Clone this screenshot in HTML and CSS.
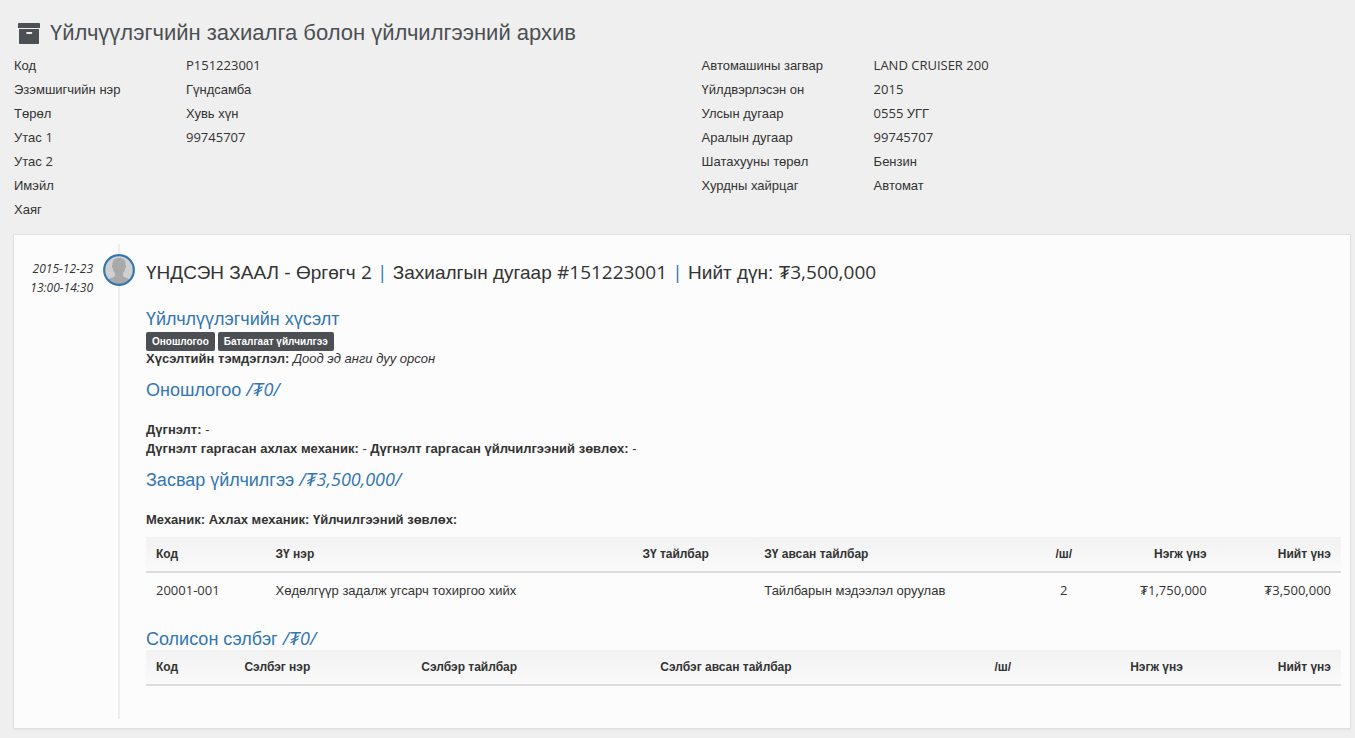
FILE: index.html
```html
<!DOCTYPE html>
<html lang="mn">
<head>
<meta charset="utf-8">
<title>Үйлчүүлэгчийн захиалга болон үйлчилгээний архив</title>
<link rel="stylesheet" href="styles.css">
</head>
<body>
<main class="page">
  <h1 class="page-title">
    <svg class="page-icon" viewBox="0 0 22 21" aria-hidden="true">
      <path d="M0.8 0h20.4q.8 0 .8.8v4.2H0V.8Q0 0 .8 0z"/>
      <path fill-rule="evenodd" d="M1 6h20v14.200q0 .8-.8.800H1.800Q1 21 1 20.200zM9 9q-.8 0-.8 1t.8 1h4.500q.8 0 .8-1t-.8-1z"/>
    </svg>
    <span>Үйлчүүлэгчийн захиалга болон үйлчилгээний архив</span>
  </h1>

  <section class="summary">
    <dl class="facts">
      <dt>Код</dt><dd class="latin">P151223001</dd>
      <dt>Эзэмшигчийн нэр</dt><dd>Гүндсамба</dd>
      <dt>Төрөл</dt><dd>Хувь хүн</dd>
      <dt>Утас <span class="latin">1</span></dt><dd class="latin">99745707</dd>
      <dt>Утас <span class="latin">2</span></dt><dd></dd>
      <dt>Имэйл</dt><dd></dd>
      <dt>Хаяг</dt><dd></dd>
    </dl>
    <dl class="facts">
      <dt>Автомашины загвар</dt><dd class="latin">LAND CRUISER 200</dd>
      <dt>Үйлдвэрлэсэн он</dt><dd class="latin">2015</dd>
      <dt>Улсын дугаар</dt><dd><span class="latin">0555 </span>УГГ</dd>
      <dt>Аралын дугаар</dt><dd class="latin">99745707</dd>
      <dt>Шатахууны төрөл</dt><dd>Бензин</dd>
      <dt>Хурдны хайрцаг</dt><dd>Автомат</dd>
    </dl>
  </section>

  <section class="card">
    <article class="entry">
      <time class="entry-time">2015-12-23<br>13:00-14:30</time>
      <div class="rail">
        <svg class="avatar" viewBox="0 0 33 33" aria-hidden="true">
          <circle cx="16.500" cy="16.500" r="15.500" fill="#d0d0d0"/>
          <path fill="#a9a9a9" d="M16.500 4c-4.800 0-7 2.800-6.700 7-.8.300-.7 2.200.4 4.200.5 2.200 1.200 3.600 2.100 4.500v3c-1.600 2-6.100 1.900-7.800 4.600 2.700 3.200 6.900 5.500 12 5.500s9.300-2.300 12-5.500c-1.700-2.700-6.200-2.600-7.800-4.600v-3c.9-.9 1.600-2.300 2.100-4.500 1.100-2 1.200-3.900.4-4.200.3-4.200-1.900-7-6.700-7z"/>
          <circle cx="16.500" cy="16.500" r="15.300" fill="none" stroke="#3276b1" stroke-width="2.200"/>
        </svg>
      </div>
      <div class="entry-body">
        <h2 class="entry-title">ҮНДСЭН ЗААЛ - Өргөгч <span class="latin">2</span> <span class="latin bar">|</span> Захиалгын дугаар <span class="latin">#151223001</span> <span class="latin bar">|</span> Нийт дүн: <span class="latin">₮3,500,000</span></h2>

        <h3 class="section-title">Үйлчлүүлэгчийн хүсэлт</h3>
        <div class="tags"><span class="tag">Оношлогоо</span><span class="tag">Баталгаат үйлчилгээ</span></div>
        <p class="line"><strong>Хүсэлтийн тэмдэглэл:</strong> <em>Доод эд анги дуу орсон</em></p>

        <h3 class="section-title">Оношлогоо <em class="latin">/₮0/</em></h3>
        <p class="line spaced"><strong>Дүгнэлт:</strong> -</p>
        <p class="line"><strong>Дүгнэлт гаргасан ахлах механик:</strong> - <strong>Дүгнэлт гаргасан үйлчилгээний зөвлөх:</strong> -</p>

        <h3 class="section-title">Засвар үйлчилгээ <em class="latin">/₮3,500,000/</em></h3>
        <p class="line spaced"><strong>Механик:</strong> <strong>Ахлах механик:</strong> <strong>Үйлчилгээний зөвлөх:</strong></p>

        <table class="grid services">
          <colgroup><col class="s-code"><col><col class="s-note"><col class="s-taken"><col class="qty"><col class="s-price"><col class="s-total"></colgroup>
          <thead>
            <tr><th>Код</th><th>ЗҮ нэр</th><th>ЗҮ тайлбар</th><th>ЗҮ авсан тайлбар</th><th class="center">/ш/</th><th class="right">Нэгж үнэ</th><th class="right">Нийт үнэ</th></tr>
          </thead>
          <tbody>
            <tr><td><span class="latin">20001-001</span></td><td>Хөдөлгүүр задалж угсарч тохиргоо хийх</td><td></td><td>Тайлбарын мэдээлэл оруулав</td><td class="center"><span class="latin">2</span></td><td class="right"><span class="latin">₮1,750,000</span></td><td class="right"><span class="latin">₮3,500,000</span></td></tr>
          </tbody>
        </table>

        <h3 class="section-title parts-title">Солисон сэлбэг <em class="latin">/₮0/</em></h3>
        <table class="grid">
          <colgroup><col class="p-code"><col><col class="p-note"><col class="p-taken"><col class="qty"><col class="p-price"><col class="p-total"></colgroup>
          <thead>
            <tr><th>Код</th><th>Сэлбэг нэр</th><th>Сэлбэр тайлбар</th><th>Сэлбэг авсан тайлбар</th><th class="center">/ш/</th><th class="right">Нэгж үнэ</th><th class="right">Нийт үнэ</th></tr>
          </thead>
        </table>
      </div>
    </article>
  </section>
</main>
</body>
</html>
```
FILE: styles.css
```css
* { box-sizing: border-box; }

body {
  margin: 0;
  background: #efefef;
  color: #333;
  font: 13px/19px "Liberation Sans", "Open Sans", sans-serif;
}

h1, h2, h3, p, dl, dd { margin: 0; font-weight: 400; }

.latin { font-family: "Open Sans", "Liberation Sans", sans-serif; }
span.latin, em.latin { line-height: 1; }

.page { padding: 18px 4px 10px 13px; }

.page-title {
  display: flex;
  align-items: center;
  gap: 10px;
  padding-left: 5px;
  color: #4c4f53;
  font-size: 22px;
  line-height: 30px;
}
.page-icon { width: 22px; height: 21px; fill: #4c4f53; }

.summary {
  display: grid;
  grid-template-columns: 18fr 17fr;
  padding: 6px 0 12px 1px;
}
.facts {
  display: grid;
  grid-template-columns: 172px 1fr;
  grid-auto-rows: 24px;
  align-content: start;
  line-height: 24px;
}
dd.latin { line-height: 22px; }

.card {
  padding: 9px;
  border: 1px solid #e0e0e0;
  background: #fcfcfc;
  box-shadow: 0 1px 1px #e8e8e8;
}

.entry {
  display: grid;
  grid-template-columns: 70px 52px 1fr;
}
.entry-time {
  padding-top: 15px;
  font: italic 12px/19px "Open Sans", sans-serif;
  text-align: right;
}
.rail {
  padding-top: 10px;
  background: linear-gradient(#eee, #eee) center / 2px 100% no-repeat;
  text-align: center;
}
.avatar { width: 32px; height: 32px; }

.entry-body { padding: 15px 0 33px 1px; }
.entry-title {
  margin-bottom: 22px;
  font-size: 19px;
  line-height: 28px;
}
.bar { color: #3276b1; }

.section-title {
  margin-top: 12px;
  color: #3276b1;
  font-size: 18px;
  line-height: 21px;
}

.tags { display: flex; gap: 3px; margin-bottom: -2px; padding-top: 2px; }
.tag {
  padding: 0 6px;
  border-radius: 2px;
  background: #4c4f53;
  color: #fff;
  font-size: 10px;
  font-weight: 700;
  line-height: 19px;
}
.spaced { margin-top: 19px; }

.grid {
  width: 100%;
  border-collapse: collapse;
  table-layout: fixed;
}
.grid th {
  padding: 8px 10px;
  border-bottom: 2px solid #dcdcdc;
  background: linear-gradient(#f2f2f2, #fafafa);
  font-size: 12px;
  font-weight: 700;
  line-height: 18px;
  text-align: left;
}
.grid td { padding: 8px 10px; }
.grid .center { text-align: center; }
.grid .right { text-align: right; }

.services { margin-top: 8px; }
.parts-title { margin-top: 21px; }

.qty { width: 5%; }
.s-code { width: 10%; }
.s-note { width: 10.2%; }
.s-taken { width: 23.4%; }
.s-price { width: 10.3%; }
.s-total { width: 10.4%; }
.p-code { width: 7.4%; }
.p-note { width: 20%; }
.p-taken { width: 27%; }
.p-price { width: 13.4%; }
.p-total { width: 12.4%; }
```
